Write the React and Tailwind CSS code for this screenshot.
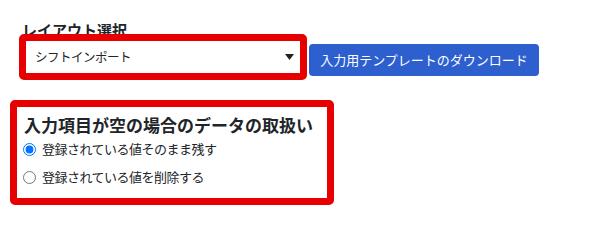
import React from "react";

const font = { fontFamily: '"Noto Sans CJK JP", "Noto Sans", sans-serif' };

const RadioRow = ({ label, checked }) => {
  return (
    <label className="flex items-center gap-[6px] h-[24px] text-[13px] tracking-[-0.5px] text-[#212529]">
      <input
        type="radio"
        name="emptyHandling"
        defaultChecked={checked}
        className="m-0 w-[13px] h-[13px] accent-[#0075ff]"
      />
      <span>{label}</span>
    </label>
  );
};

const App = () => {
  return (
    <div
      className="w-[592px] h-[214px] bg-white px-[10px] pt-[21px] overflow-hidden"
      style={font}
    >
      <h3 className="ml-[12px] h-[13px] text-[15px] font-bold leading-[18px] text-[#212529]">
        レイアウト選択
      </h3>

      <div className="flex items-start ml-[9px]">
        <div className="relative w-[288px] border-[7px] border-[#e60000] rounded-[5px] bg-white">
          <div className="flex items-center justify-between h-[32px] pl-[9px] pr-[6px] text-[12.5px] tracking-[-0.5px] text-[#212529]">
            <span>シフトインポート</span>
            <svg width="9" height="6" viewBox="0 0 9 6">
              <path d="M0 0 L9 0 L4.5 6 Z" fill="#222" />
            </svg>
          </div>
        </div>
        <button className="ml-[2px] mt-[10px] w-[230px] h-[32px] rounded-[4px] bg-[#2d5fcf] text-white text-[13px] flex items-center justify-center">
          入力用テンプレートのダウンロード
        </button>
      </div>

      <div className="mt-[20px] w-[324px] border-[7px] border-[#e60000] rounded-[5px] pt-[6px] pb-[9px] pl-[6px]">
        <h4 className="ml-[1px] text-[17px] font-bold leading-[24px] text-[#212529]">
          入力項目が空の場合のデータの取扱い
        </h4>
        <div className="flex flex-col gap-[4px]">
          <RadioRow label="登録されている値そのまま残す" checked />
          <RadioRow label="登録されている値を削除する" />
        </div>
      </div>
    </div>
  );
};

export default App;
